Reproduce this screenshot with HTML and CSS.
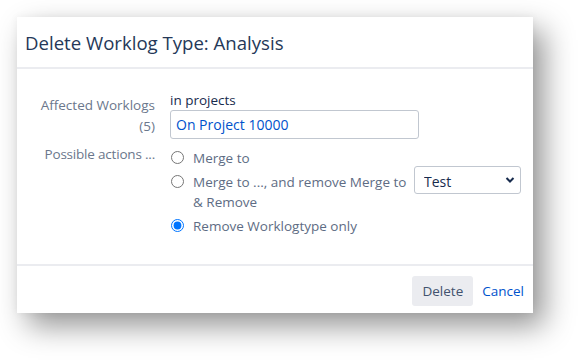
FILE: index.html
```html
<!DOCTYPE html>
<html lang="en">
<head>
    <meta charset="UTF-8">
    <meta name="viewport" content="width=device-width, initial-scale=1.0">
    <title>Delete Worklog Type</title>
    <link rel="stylesheet" href="styles.css">
</head>
<body>
    <div class="dialog">
        <div class="dialog-header">
            <h2>Delete Worklog Type: Analysis</h2>
        </div>
        <div class="dialog-body">
            <div class="field-label label-affected">Affected Worklogs<br>(5)</div>
            <div class="field">
                <div class="field-caption">in projects</div>
                <div class="project-box">On Project 10000</div>
            </div>

            <div class="field-label label-actions">Possible actions ...</div>
            <div class="field options">
                <label class="option">
                    <input type="radio" name="action">
                    <span>Merge to</span>
                </label>
                <div class="option option-merge">
                    <label class="option-inner">
                        <input type="radio" name="action">
                        <span>Merge to ..., and remove Merge to &amp; Remove</span>
                    </label>
                    <div class="select-wrap">
                        <select class="select">
                            <option>Test</option>
                        </select>
                        <svg class="chevron" width="10" height="8" viewBox="0 0 10 8">
                            <path d="M1.5 2 L5 5.5 L8.5 2" fill="none" stroke="#172b4d" stroke-width="2"/>
                        </svg>
                    </div>
                </div>
                <label class="option">
                    <input type="radio" name="action" checked>
                    <span>Remove Worklogtype only</span>
                </label>
            </div>
        </div>
        <div class="dialog-footer">
            <button class="btn">Delete</button>
            <a class="link" href="#">Cancel</a>
        </div>
    </div>
</body>
</html>
```

FILE: styles.css
```css
html {
    background: #fff;
}
body {
    margin: 0;
    padding: 17px;
    min-height: 100vh;
    box-sizing: border-box;
    background: #fff;
    font-family: "Open Sans", "Noto Sans", sans-serif;
    font-size: 13.5px;
    color: #172b4d;
}
.dialog {
    width: 516px;
    background: #fff;
    box-shadow: 11px 13px 28px rgba(0, 0, 0, 0.42), 0 0 8px rgba(0, 0, 0, 0.05);
}
.dialog-header {
    height: 50px;
    border-bottom: 2px solid #ebecf0;
    display: flex;
    align-items: center;
    padding: 0 8px;
}
.dialog-header h2 {
    margin: 0;
    font-size: 18.6px;
    font-weight: 400;
    color: #253858;
}
.dialog-body {
    height: 173px;
    display: grid;
    grid-template-columns: 138px 1fr;
    column-gap: 15px;
    align-content: start;
    padding-top: 22px;
    border-bottom: 2px solid #ebecf0;
}
.field-label {
    text-align: right;
    color: #6b778c;
    line-height: 21px;
}
.label-affected {
    padding-top: 4px;
}
.label-actions {
    padding-top: 5px;
    letter-spacing: -0.2px;
}
.field-caption {
    line-height: 19px;
}
.project-box {
    width: 237px;
    height: 27px;
    border: 1px solid #c1c7d0;
    border-radius: 3px;
    padding: 0 5px;
    line-height: 27px;
    color: #0052cc;
    font-size: 14px;
}
.options {
    display: flex;
    flex-direction: column;
    gap: 4px;
    padding-top: 9px;
    color: #5e6c84;
}
.option {
    display: flex;
    align-items: flex-start;
    line-height: 20px;
}
.option input {
    margin: 3px 9px 0 1px;
    width: 13px;
    height: 13px;
    accent-color: #0075ff;
}
.option-merge {
    justify-content: space-between;
    width: 351px;
}
.option-inner {
    display: flex;
    align-items: flex-start;
    width: 240px;
}
.select-wrap {
    position: relative;
    margin-top: -6px;
}
.select {
    appearance: none;
    display: block;
    width: 107px;
    height: 28px;
    border: 1px solid #c1c7d0;
    border-radius: 3px;
    background: #fff;
    padding: 2px 9px 0;
    font-family: inherit;
    font-size: 14px;
    color: #172b4d;
}
.chevron {
    position: absolute;
    right: 6px;
    top: 10px;
    pointer-events: none;
}
.dialog-footer {
    height: 47px;
    display: flex;
    align-items: flex-start;
    justify-content: flex-end;
    padding: 10px 9px 0 0;
    box-sizing: border-box;
}
.btn {
    height: 30px;
    padding: 0 10px;
    border: none;
    border-radius: 3px;
    background: #ebecf0;
    color: #42526e;
    font-family: inherit;
    font-size: 13.5px;
}
.link {
    margin-left: 9px;
    line-height: 30px;
    color: #0052cc;
    text-decoration: none;
    font-size: 13.5px;
}
```
